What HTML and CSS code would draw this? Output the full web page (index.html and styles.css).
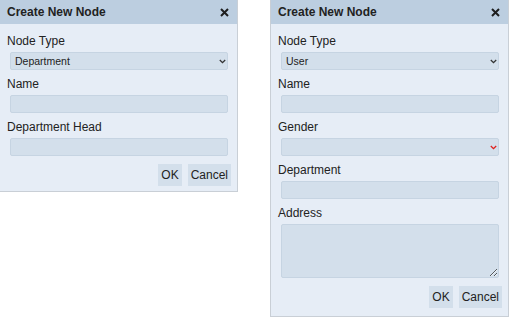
FILE: index.html
```html
<!DOCTYPE html>
<html lang="en">
<head>
  <meta charset="UTF-8">
  <title>Create New Node</title>
  <link rel="stylesheet" href="styles.css">
</head>
<body>
  <div class="dialogs">

    <!-- Department dialog -->
    <div class="dialog">
      <div class="dialog-header">
        <span class="dialog-title">Create New Node</span>
        <svg class="close" width="9" height="9" viewBox="0 0 9 9"><path d="M1 1L8 8M8 1L1 8" stroke="#1e1e1e" stroke-width="2"/></svg>
      </div>
      <div class="dialog-body">
        <div class="field">
          <label>Node Type</label>
          <div class="select-wrap">
            <select><option>Department</option></select>
            <svg class="chevron" width="7" height="5" viewBox="0 0 7 5"><path d="M0.8 1L3.5 3.7L6.2 1" fill="none" stroke="#333" stroke-width="1.3"/></svg>
          </div>
        </div>
        <div class="field">
          <label>Name</label>
          <input type="text">
        </div>
        <div class="field">
          <label>Department Head</label>
          <input type="text">
        </div>
        <div class="buttons">
          <button>OK</button>
          <button>Cancel</button>
        </div>
      </div>
    </div>

    <!-- User dialog -->
    <div class="dialog">
      <div class="dialog-header">
        <span class="dialog-title">Create New Node</span>
        <svg class="close" width="9" height="9" viewBox="0 0 9 9"><path d="M1 1L8 8M8 1L1 8" stroke="#1e1e1e" stroke-width="2"/></svg>
      </div>
      <div class="dialog-body dialog-body-tall">
        <div class="field">
          <label>Node Type</label>
          <div class="select-wrap">
            <select><option>User</option></select>
            <svg class="chevron" width="7" height="5" viewBox="0 0 7 5"><path d="M0.8 1L3.5 3.7L6.2 1" fill="none" stroke="#333" stroke-width="1.3"/></svg>
          </div>
        </div>
        <div class="field">
          <label>Name</label>
          <input type="text">
        </div>
        <div class="field">
          <label>Gender</label>
          <div class="select-wrap">
            <select><option></option></select>
            <svg class="chevron" width="7" height="5" viewBox="0 0 7 5"><path d="M0.8 1L3.5 3.7L6.2 1" fill="none" stroke="#e0201c" stroke-width="1.3"/></svg>
          </div>
        </div>
        <div class="field">
          <label>Department</label>
          <input type="text">
        </div>
        <div class="field">
          <label>Address</label>
          <textarea></textarea>
        </div>
        <div class="buttons">
          <button>OK</button>
          <button>Cancel</button>
        </div>
      </div>
    </div>

  </div>
</body>
</html>
```

FILE: styles.css
```css
body, html {
  margin: 0;
  background: #fff;
  font-family: "Liberation Sans", Arial, sans-serif;
  color: #222;
}

.dialogs {
  display: flex;
  align-items: flex-start;
  gap: 32px;
  margin: -1px 0 0 -1px;
}

.dialog {
  width: 239px;
  box-sizing: border-box;
  border: 1px solid #c9cfd6;
  background: #e6edf6;
}

.dialog-header {
  height: 24px;
  box-sizing: border-box;
  padding: 0 6px 0 7px;
  display: flex;
  align-items: center;
  justify-content: space-between;
  background: #bccee0;
}

.dialog-title {
  font-size: 12px;
  font-weight: bold;
  color: #222;
}

.close {
  display: block;
  margin-right: 2px;
}

.dialog-body {
  padding: 9px 6px 5px 7px;
}

.dialog-body-tall {
  padding-bottom: 8px;
}

.field {
  margin-bottom: 6px;
}

.field:last-of-type {
  margin-bottom: 0;
}

.field label {
  display: block;
  font-size: 12px;
  line-height: 16px;
  margin-bottom: 3px;
}

.field input,
.field select,
.field textarea {
  display: block;
  width: 218px;
  height: 18px;
  box-sizing: border-box;
  margin: 0 0 0 3px;
  border: 1px solid #c6d4e2;
  border-radius: 2px;
  background: #d3dfeb;
  font-family: "Liberation Sans", Arial, sans-serif;
  font-size: 10.5px;
  color: #222;
  outline: none;
}

.field select {
  appearance: none;
  -webkit-appearance: none;
  padding: 0 14px 0 4px;
}

.field textarea {
  height: 54px;
  margin-bottom: 7px;
  resize: both;
}

.select-wrap {
  position: relative;
}

.chevron {
  position: absolute;
  right: 5px;
  top: 7px;
}

.buttons {
  display: flex;
  justify-content: flex-end;
  gap: 6px;
  margin-top: 8px;
}

.buttons button {
  height: 22px;
  padding: 0 3px;
  border: none;
  background: #d3dfeb;
  font-family: "Liberation Sans", Arial, sans-serif;
  font-size: 12px;
  color: #222;
  cursor: pointer;
}
```
